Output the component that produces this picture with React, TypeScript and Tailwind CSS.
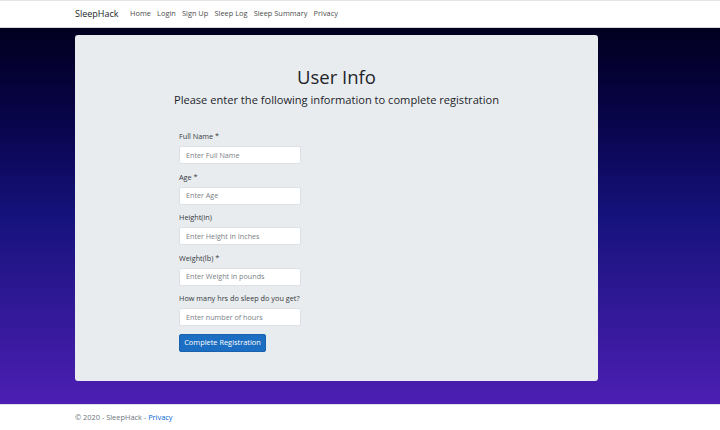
import React from "react";

const fields = [
  { label: "Full Name *", ph: "Enter Full Name" },
  { label: "Age *", ph: "Enter Age" },
  { label: "Height(in)", ph: "Enter Height in Inches" },
  { label: "Weight(lb) *", ph: "Enter Weight in pounds" },
  { label: "How many hrs do sleep do you get?", ph: "Enter number of hours" },
];

export default function App() {
  return (
    <div
      className="w-[720px] h-[430px] flex flex-col bg-white overflow-hidden"
      style={{ fontFamily: '"Open Sans", "Noto Sans", sans-serif' }}
    >
      <nav className="h-[28px] shrink-0 flex items-center pl-[75px] bg-white border-t border-[#e5e5e5] border-b border-b-[#d8d8d8] shadow-[0_1px_3px_rgba(0,0,0,0.06)]">
        <span className="text-[9px] text-[#212529] mr-[11.5px]">SleepHack</span>
        <div className="flex gap-[6.2px] text-[7.4px] text-[#4d4d4d]">
          <span>Home</span>
          <span>Login</span>
          <span>Sign Up</span>
          <span>Sleep Log</span>
          <span>Sleep Summary</span>
          <span>Privacy</span>
        </div>
      </nav>
      <main className="h-[376px] shrink-0 bg-gradient-to-b from-[#020020] via-[#15127c] to-[#4c1eb3] pl-[75px] pt-[7px]">
        <div className="w-[523px] h-[346px] bg-[#e9ecef] rounded-[3px] flex flex-col">
          <h1 className="text-center text-[18.5px] leading-[24px] text-[#212529] mt-[30px]">User Info</h1>
          <h5 className="text-center text-[11.1px] leading-[15px] text-[#212529] font-medium mt-[3px]">
            Please enter the following information to complete registration
          </h5>
          <div className="pl-[104px] mt-[24px] flex flex-col">
            {fields.map((f) => (
              <div key={f.label} className="flex flex-col mb-[7.5px]">
                <label className="text-[7.3px] leading-[10px] text-[#343a40] mb-[5px]">{f.label}</label>
                <div className="w-[122px] h-[18px] bg-white border border-[#dde1e5] rounded-[2px] flex items-center pl-[6px] text-[7.2px] text-[#7b8187]">
                  {f.ph}
                </div>
              </div>
            ))}
            <div className="w-[87px] h-[18px] bg-[#1b6ec2] border border-[#1861ac] rounded-[2px] flex items-center justify-center text-[7.4px] text-white">
              Complete Registration
            </div>
          </div>
        </div>
      </main>
      <footer className="flex-1 border-t border-[#dee2e6] pl-[75px] flex items-center text-[7.4px] text-[#6c757d]">
        <span>
          © 2020 - SleepHack - <span className="text-[#0366d6]">Privacy</span>
        </span>
      </footer>
    </div>
  );
}
